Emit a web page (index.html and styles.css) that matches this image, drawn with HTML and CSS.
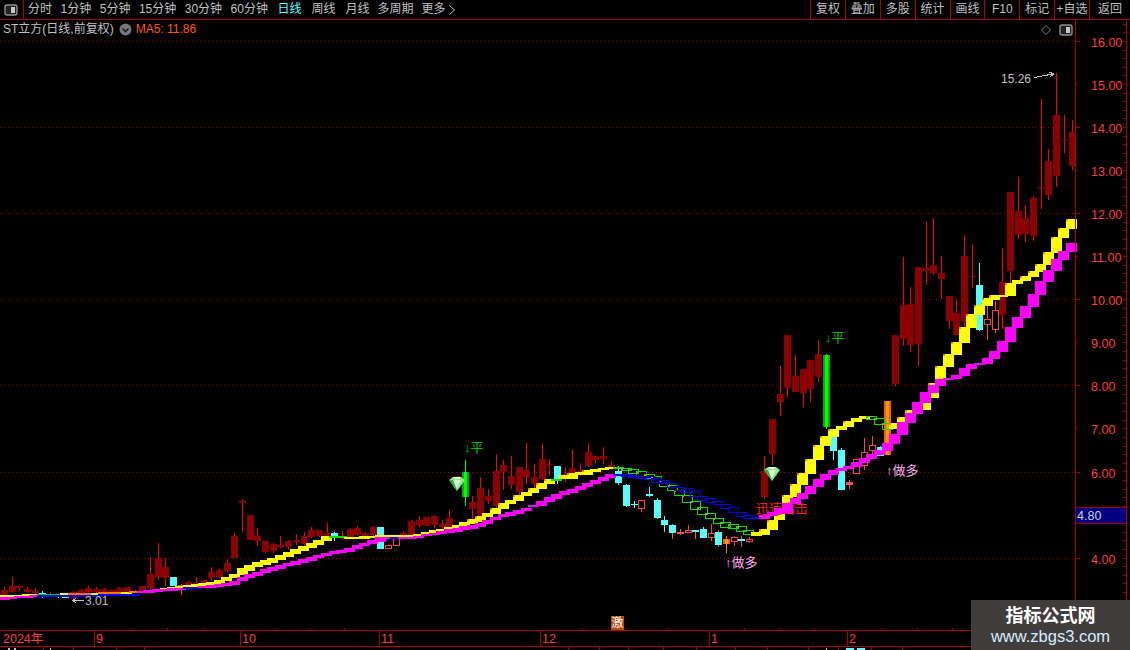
FILE: index.html
```html
<!DOCTYPE html>
<html lang="zh">
<head>
<meta charset="utf-8">
<title>ST立方</title>
<link rel="stylesheet" href="styles.css">
</head>
<body>
<div class="app">
  <header class="toolbar">
    <div class="panel-toggle">
      <svg class="panel-icon" width="14" height="12" viewBox="0 0 14 12"><rect x="1" y="1" width="12" height="10" rx="2" class="pi-frame"/><rect x="7" y="3" width="4" height="6" class="pi-bar"/></svg>
    </div>
    <nav class="tabs tabs-period">
      <span>分时</span><span>1分钟</span><span>5分钟</span><span>15分钟</span><span>30分钟</span><span>60分钟</span>
    </nav>
    <nav class="tabs tabs-day">
      <span class="active">日线</span><span>周线</span><span>月线</span>
    </nav>
    <nav class="tabs tabs-more">
      <span>多周期</span>
      <span class="more">更多<svg width="8" height="12" viewBox="0 0 8 12"><path d="M1.5 1.5 6.5 6 1.5 10.5" class="chev"/></svg></span>
    </nav>
    <div class="tools">
      <span>复权</span><span>叠加</span><span>多股</span><span>统计</span><span>画线</span><span>F10</span><span>标记</span><span>+自选</span><span class="back">返回</span>
    </div>
  </header>
  <main class="stage">
    <div id="chart" class="chart"></div>
    <div class="legend">
      <span class="legend-name">ST立方(日线,前复权)</span>
      <svg width="13" height="13" viewBox="0 0 13 13" class="legend-drop"><circle cx="6.5" cy="6.5" r="6" class="drop-bg"/><path d="M3.5 5.5 6.5 8.5 9.5 5.5" class="drop-chev"/></svg>
      <span class="legend-ma">MA5: 11.86</span>
    </div>
    <div class="corner-tools">
      <svg width="10" height="10" viewBox="0 0 10 10"><path d="M5 .5 9.5 5 5 9.5 .5 5Z" class="diamond"/></svg>
      <svg width="14" height="12" viewBox="0 0 14 12"><rect x="1" y="1" width="12" height="10" rx="2" class="pi-frame"/><rect x="7" y="3" width="4" height="6" class="pi-bar"/></svg>
    </div>
    <aside class="watermark">
      <div class="wm-title">指标公式网</div>
      <div class="wm-url">www.zbgs3.com</div>
    </aside>
  </main>
</div>
<script src="chart.js"></script>
</body>
</html>
```
FILE: styles.css
```css
* { box-sizing: border-box; }
html, body { margin: 0; padding: 0; background: #000; }
body { font-family: "Liberation Sans", "Noto Sans CJK SC", sans-serif; font-size: 12px; color: #c0c0c0; }
.app { width: 1130px; height: 650px; display: flex; flex-direction: column; overflow: hidden; background: #000; }

.toolbar { flex: 0 0 20px; display: flex; align-items: stretch; border-bottom: 1px solid #a80000; line-height: 19px; white-space: nowrap; }
.panel-toggle { width: 24px; border-right: 1px solid #a80000; display: flex; align-items: center; padding-left: 4px; }
.panel-icon { display: block; }
.pi-frame { fill: #222; stroke: #909090; stroke-width: 1.4; }
.pi-bar { fill: #c8c8c8; }
.tabs { display: flex; }
.tabs-period { gap: 8.5px; margin-left: 4px; }
.tabs-day { gap: 10px; margin-left: 9.5px; }
.tabs-more { gap: 8px; margin-left: 8px; }
.active { color: #55ffff; }
.more { display: flex; align-items: center; gap: 2px; }
.chev { fill: none; stroke: #c0c0c0; stroke-width: 1; }
.tools { margin-left: auto; display: flex; }
.tools span { width: 34.875px; border-left: 1px solid #a80000; text-align: center; }
.tools .back { width: 41px; }

.stage { flex: 1; position: relative; }
.chart { width: 1130px; height: 630px; }
.chart svg { display: block; }

.legend { position: absolute; left: 3px; top: 0; height: 18px; display: flex; align-items: center; line-height: 18px; white-space: nowrap; }
.legend-drop { margin-left: 5px; }
.drop-bg { fill: #777; }
.drop-chev { fill: none; stroke: #111; stroke-width: 1.3; }
.legend-ma { margin-left: 4px; color: #ff5a00; }

.corner-tools { position: absolute; right: 57px; top: 4px; display: flex; align-items: center; gap: 8px; }
.corner-tools svg { display: block; }
.diamond { fill: none; stroke: #808080; stroke-width: 1; }

.watermark { position: absolute; left: 971px; top: 580px; width: 159px; height: 50px; background: #413d3c; text-align: center; }
.wm-title { font-size: 18px; font-weight: 700; line-height: 22px; margin-top: 5px; color: #fff; }
.wm-url { font-size: 16.5px; line-height: 18px; color: #d8ecff; }

/* chart drawing */
.grid { stroke: #a80000; stroke-dasharray: 1 3; stroke-width: 1; }
.rule { stroke: #a80000; stroke-width: 1; }
.price { fill: #ff3c3c; font-size: 12.5px; }
.date { fill: #ff3c3c; font-size: 12.5px; }
.note { font-size: 13px; }
.note-gray { fill: #c0c0c0; font-size: 12px; }
.note-green { fill: #00c000; }
.note-pink { fill: #ffa8f0; }
.note-red { fill: #ff2020; }
.arrow { stroke: #c0c0c0; stroke-width: 1; fill: none; }
.box-price { fill: #000080; stroke: #a80000; }
.box-text { fill: #d0d0d0; font-size: 12.5px; }
.badge-text { fill: #fff; font-size: 12px; }
.gem-a { fill: #8fe88f; }
.gem-b { fill: #d8ffd8; }
.gem-c { fill: #30b030; }
text { font-family: "Liberation Sans", "Noto Sans CJK SC", sans-serif; }
```
FILE: chart.js
```js
// Candle data in screen pixels: [type, bodyTop, bodyBottom, wickTop, wickBottom]
// d dark up, c cyan down, h hollow, p pink small, g green signal, o orange signal, w white
var CANDLES = [
['d',590,596,587,597],['d',586,592,577,592],['d',586,588,586,591],['d',589,592,587,593],['d',591,593,588,595],
['c',593,594,591,598],['d',594,596,592,597],['w',596,597,596,598],['c',596,598,595,598],['d',592,598,591,599],
['d',590,593,589,594],['d',588,592,586,593],['d',589,592,587,593],['d',589,592,588,593],['d',590,592,590,592],
['d',588,592,587,593],['d',587,592,587,592],['d',591,592,590,593],['d',586,591,586,591],['d',574,588,558,590],
['d',558,577,543,580],['d',567,578,558,586],['c',577,586,577,586],['h',585,588,584,595],['d',582,587,581,590],
['d',583,584,577,584],['d',580,583,580,583],['d',572,578,567,581],['d',570,577,569,578],['d',563,571,559,572],
['d',536,558,533,558],['d',501,503,499,532],['d',515,540,515,540],['d',536,541,528,546],['d',541,552,541,553],
['d',544,551,543,553],['d',545,547,536,548],['d',541,547,540,550],['d',540,542,534,545],['d',536,544,532,546],
['d',530,537,527,538],['d',530,536,530,537],['d',533,536,523,537],['c',533,537,532,541],['d',537,539,531,540],
['d',529,537,528,538],['d',528,535,526,536],['d',533,537,532,538],['d',527,535,526,536],['c',527,549,527,549],
['h',545,549,545,549],['h',537,546,537,546],['d',533,536,531,537],['d',521,535,520,535],['d',520,525,516,527],
['d',517,526,517,526],['d',516,525,515,528],['d',524,527,520,530],['d',518,527,510,528],['d',476,477,476,477],
['g',472,497,460,506],['d',502,509,496,520],['d',488,517,477,520],['d',496,501,489,504],['d',471,506,454,508],
['d',465,472,460,490],['d',476,485,456,489],['d',467,492,467,495],['d',470,477,443,484],['d',477,484,464,491],
['d',459,479,444,480],['d',464,465,459,475],['c',466,479,466,484],['d',474,478,467,482],['d',468,475,450,477],
['d',471,474,463,476],['d',452,466,443,467],['d',456,460,456,463],['d',456,459,447,464],['d',465,468,461,470],
['c',471,483,466,485],['c',485,506,484,507],['c',504,505,501,508],['h',500,509,500,512],['c',494,496,487,497],
['c',500,518,498,519],['c',520,525,516,532],['cp',525,533,524,539],['p',532,534,529,535],['h',530,533,525,533],
['cp',530,532,530,539],['c',529,538,527,538],['h',533,538,524,541],['cp',532,545,530,547],['o',539,544,536,553],
['h',537,542,536,546],['cp',539,541,536,547],['h',539,542,537,543],null,['d',471,497,456,499],
['d',419,454,419,465],['d',394,402,366,416],['d',335,388,335,397],['d',376,392,355,392],['d',369,393,369,407],
['d',360,389,360,402],['d',354,377,340,382],['g',355,427,354,429],['c',437,451,437,460],['c',450,490,448,490],
['p',482,485,480,489],['h',459,474,459,474],['h',452,466,438,470],['h',445,451,436,455],['c',447,456,446,456],
['o',401,455,401,455],['d',335,384,335,386],['d',305,339,257,346],['d',304,345,287,352],['d',267,344,267,366],
['d',268,271,222,285],['d',265,273,218,275],['d',273,279,256,299],['d',296,321,296,329],['d',313,335,300,335],
['d',256,322,235,327],['d',276,277,244,288],['c',285,330,263,331],['h',319,325,306,340],['h',310,330,301,333],
['d',282,315,248,329],['d',192,271,192,284],['d',211,235,177,239],['d',218,234,205,242],['d',198,236,196,241],
['d',187,188,99,209],['d',161,195,149,200],['d',115,176,73,187],['d',140,141,115,153],['d',132,166,120,170]
];

// Band keyframes [k, top, bottom]; steps between keyframes are interpolated.
var YELLOW = [[0,595,597],[4,594,596],[10,593,595],[19,591,593],[21,588,591],[24,585,588],[26,583,586],[28,580,584],
[30,574,578],[31,568,575],[33,562,567],[35,558,563],[37,552,557],[39,546,551],[41,540,545],[42,536,541],[44,536,539],
[46,537,539],[49,535,538],[53,535,537],[55,532,534],[59,525,529],[60,522,526],[62,516,522],[63,513,517],[64,508,514],
[65,503,509],[66,500,504],[67,495,501],[68,492,496],[69,488,493],[70,483,489],[71,479,484],[72,479,481],[73,475,479],
[74,473,479],[75,472,475],[76,470,475],[77,469,472],[78,468,470],[79,467,469],[80,467,469],[81,468,470],[82,469,473],
[83,471,476],[84,474,478],[85,476,482],[86,480,486],[87,485,490],[88,490,495],[89,495,502],[90,501,509],[91,507,514],
[92,513,518],[93,518,523],[94,522,527],[95,524,528],[96,526,531],[97,530,534],[98,532,536],[99,529,535],[100,520,530],
[101,510,520],[102,495,510],[103,484,497],[104,473,485],[105,459,474],[106,445,460],[107,436,446],[108,429,437],
[109,426,430],[110,421,427],[111,418,422],[112,416,419],[113,416,419],[114,418,424],[115,423,429],[116,423,429],
[117,417,422],[118,410,416],[119,405,412],[120,400,410],[121,383,398],[122,366,379],[123,354,367],[124,342,355],
[125,327,343],[126,314,328],[127,305,315],[128,298,306],[129,295,300],[130,295,297],[131,283,296],[132,280,284],
[133,276,281],[134,271,277],[135,264,272],[136,252,265],[137,237,253],[138,228,238],[139,219,229]];

var MAGENTA = [[0,597,600],[2,596,598],[4,595,597],[7,595,596],[17,594,595],[18,591,593],[20,589,592],[24,587,589],
[26,586,588],[28,584,587],[30,581,585],[31,577,581],[32,574,578],[33,572,576],[34,569,573],[35,567,571],[37,563,566],
[39,559,563],[41,555,558],[43,551,554],[45,548,552],[46,545,549],[47,543,546],[48,540,544],[49,537,542],[50,537,539],
[51,537,539],[53,537,539],[56,533,535],[58,529,533],[60,526,530],[62,523,527],[64,517,520],[65,514,517],[67,510,514],
[69,505,507],[70,501,506],[71,497,502],[73,491,495],[75,486,490],[76,483,487],[77,480,484],[78,477,481],[79,474,478],
[80,474,475],[81,474,476],[82,475,477],[84,476,479],[85,478,482],[86,480,483],[87,483,487],[88,487,490],[89,488,492],
[90,491,496],[91,496,500],[92,498,502],[93,501,504],[94,504,508],[95,507,512],[96,512,516],[97,515,518],[98,517,519],
[99,515,519],[100,512,516],[101,508,514],[102,503,513],[103,498,504],[104,493,499],[105,486,494],[106,479,487],
[107,474,480],[108,470,475],[109,468,471],[110,466,469],[111,462,467],[112,458,463],[113,454,459],[114,450,455],
[115,443,451],[116,434,444],[117,422,435],[118,413,423],[119,402,414],[120,392,403],[121,385,393],[122,379,386],
[123,378,380],[124,375,379],[125,368,376],[126,364,369],[127,363,365],[128,358,364],[129,351,359],[130,341,352],
[131,327,342],[132,317,328],[133,306,318],[134,294,307],[135,281,295],[136,270,282],[137,259,271],[138,251,260],[139,243,252]];

var PRICE_TOP = 41, PX_PER_UNIT = 43.05;
var RED = '#ff0000', PINK = '#ff5050', HOLLOW = '#ff4040', CYAN = '#55ffff', DARK = '#8b0000';

function slotX(k) { return 4 + 7.68 * k; }
function priceY(p) { return Math.round(PRICE_TOP + (16 - p) * PX_PER_UNIT); }

function expand(frames) {
  var out = [];
  for (var i = 0; i < frames.length - 1; i++) {
    var a = frames[i], b = frames[i + 1];
    for (var k = a[0]; k < b[0]; k++) {
      var t = (k - a[0]) / (b[0] - a[0]);
      out[k] = [Math.round(a[1] + (b[1] - a[1]) * t), Math.round(a[2] + (b[2] - a[2]) * t)];
    }
  }
  var last = frames[frames.length - 1];
  out[last[0]] = [last[1], last[2]];
  return out;
}

var parts = [];
function rect(x, y, w, h, fill) {
  parts.push('<rect x="' + x + '" y="' + y + '" width="' + w + '" height="' + Math.max(h, 1) + '" fill="' + fill + '"/>');
}
function frame(x, y, w, h, stroke, fill) {
  parts.push('<rect x="' + (x + 0.5) + '" y="' + (y + 0.5) + '" width="' + (w - 1) + '" height="' + Math.max(h - 1, 1) + '" fill="' + (fill || 'none') + '" stroke="' + stroke + '"/>');
}
function line(x1, y1, x2, y2, cls) {
  parts.push('<line x1="' + x1 + '" y1="' + y1 + '" x2="' + x2 + '" y2="' + y2 + '" class="' + cls + '"/>');
}
function text(x, y, cls, s) {
  parts.push('<text x="' + x + '" y="' + y + '" class="' + cls + '">' + s + '</text>');
}

function drawGrid() {
  for (var p = 16; p >= 4; p -= 2) {
    line(0, priceY(p) + 0.5, 1075, priceY(p) + 0.5, 'grid');
  }
}

function drawCandles() {
  CANDLES.forEach(function (c, k) {
    if (!c) return;
    var x = slotX(k), cx = Math.round(x), left = cx - 3;
    var type = c[0], top = c[1], bot = c[2], wt = c[3], wb = c[4];
    var wick = { d: RED, c: CYAN, cp: PINK, h: HOLLOW, p: PINK, g: '#00ff00', o: '#ff8000', w: '#ffffff' }[type];
    rect(cx, wt, 1, wb - wt, wick);
    if (type === 'd') rect(left, top, 7, bot - top, DARK);
    else if (type === 'c' || type === 'cp') rect(left, top, 7, bot - top, CYAN);
    else if (type === 'w') rect(left, top, 7, bot - top, '#ffffff');
    else if (type === 'p') rect(left, top, 7, bot - top, PINK);
    else if (type === 'h') frame(left, top, 7, bot - top, HOLLOW, '#000');
    else if (type === 'g') { rect(left, top, 7, bot - top, '#00b000'); rect(left + 2, top, 3, bot - top, '#00ff00'); }
    else if (type === 'o') { rect(left, top, 7, bot - top, '#ff5a00'); rect(left + 2, top, 3, bot - top, '#ff9a00'); }
  });
}

function drawUpper() {
  var bands = expand(YELLOW);
  bands.forEach(function (b, k) {
    var x = Math.round(slotX(k) - 5.5), h = b[1] - b[0];
    var down = (k >= 81 && k <= 97) || (k >= 113 && k <= 115);
    if (down) {
      frame(x, b[0], 11, h + 1, '#00e000');
      rect(x, b[0] + 1, 2, 1, '#ff8000');
    } else if (k >= 5 && k <= 18 && k % 4 !== 0) {
      rect(x, b[0], 11, h, k < 8 ? '#00d000' : '#ff7000');
    } else if (k === 43 || k === 44 || k === 72 || k === 80) {
      rect(x, b[0], 11, 2, '#00e000');
    } else {
      rect(x, b[0], 11, h, '#ffff00');
      if (h >= 5 && k > 55) rect(x, b[0], 2, 2, '#ff8000');
    }
  });
}

function drawLower() {
  var bands = expand(MAGENTA);
  bands.forEach(function (b, k) {
    var x = Math.round(slotX(k) - 5.5), h = b[1] - b[0];
    if (k >= 80 && k <= 97) frame(x, b[0], 11, h + 1, '#0000e0');
    else if ((k >= 5 && k <= 17) || (k >= 24 && k <= 25) || k === 51 || k === 98) rect(x, b[0], 11, Math.max(h, 2), '#0000ff');
    else rect(x, b[0], 11, h, '#ff00ff');
  });
}

function drawAxis() {
  line(1075.5, 20, 1075.5, 630, 'rule');
  line(1126.5, 20, 1126.5, 630, 'rule');
  for (var p = 16; p >= 4; p--) {
    var y = priceY(p) + 0.5;
    line(1075, y, p % 2 ? 1078 : 1080, y, 'rule');
    if (p !== 5) text(1091, y + 5, 'price', p.toFixed(2));
  }
  for (var m = 16.4; m > 2.4; m -= 0.2) {
    var my = Math.round(PRICE_TOP + (16 - m) * PX_PER_UNIT) + 0.5;
    line(1123, my, 1126, my, 'rule');
  }
  parts.push('<rect x="1075.5" y="507.5" width="51" height="16" class="box-price"/>');
  text(1077, 520, 'box-text', '4.80');
}

function drawDates() {
  line(0, 630.5, 1130, 630.5, 'rule');
  line(0, 646.5, 1130, 646.5, 'rule');
  [94, 240, 379, 540, 709, 847].forEach(function (x) { line(x + 0.5, 630, x + 0.5, 646, 'rule'); });
  [131, 167, 204, 275, 310, 344, 582, 625, 667, 744, 779, 814, 882, 917, 952].forEach(function (x) {
    line(x + 0.5, 628, x + 0.5, 630, 'rule');
  });
  [43, 73, 116, 144, 568, 599, 628, 663, 696, 735, 767, 808, 838, 871, 902].forEach(function (x) {
    line(x + 0.5, 647, x + 0.5, 650, 'rule');
  });
  rect(8, 648, 2, 2, '#c0c0c0'); rect(14, 648, 2, 2, '#c0c0c0'); rect(50, 648, 1, 2, '#c0c0c0');
  rect(826, 648, 1, 2, '#c0c0c0'); rect(846, 648, 8, 2, CYAN); rect(857, 648, 8, 2, CYAN);
  text(3, 643, 'date', '2024年');
  text(96, 643, 'date', '9');
  text(242, 643, 'date', '10');
  text(381, 643, 'date', '11');
  text(542, 643, 'date', '12');
  text(711, 643, 'date', '1');
  text(849, 643, 'date', '2');
}

function gem(cx, cy) {
  parts.push('<g transform="translate(' + cx + ' ' + cy + ')" shape-rendering="auto">' +
    '<polygon points="-8,-4 -4,-7 4,-7 8,-4 0,7" class="gem-a"/>' +
    '<polygon points="-4,-4 4,-4 0,4" class="gem-b"/>' +
    '<polygon points="-8,-4 -4,-4 0,7" class="gem-c"/>' +
    '<polygon points="-4,-7 4,-7 2,-5 -2,-5" class="gem-b"/></g>');
}

function drawNotes() {
  gem(457, 484); gem(772, 474);
  text(85, 605, 'note-gray', '3.01');
  parts.push('<path d="M84 600.5H73M76 598 73 600.5 76 603" class="arrow"/>');
  text(1001, 83, 'note-gray', '15.26');
  parts.push('<path d="M1034 77.5 1053 74M1049 72 1054 74 1050 77" class="arrow"/>');
  text(464, 452, 'note note-green', '↓平');
  text(825, 342, 'note note-green', '↓平');
  text(725, 567, 'note note-pink', '↑做多');
  text(886, 475, 'note note-pink', '↑做多');
  rect(611, 616, 13, 14, '#b84a0c');
  text(611.5, 627, 'badge-text', '激');
}

function build() {
  drawGrid();
  drawCandles();
  drawUpper();
  text(756, 513, 'note note-red', '迅速出击');
  drawLower();
  drawAxis();
  drawDates();
  drawNotes();
  document.getElementById('chart').innerHTML =
    '<svg xmlns="http://www.w3.org/2000/svg" width="1130" height="630" viewBox="0 20 1130 630" shape-rendering="crispEdges">' +
    parts.join('') + '</svg>';
}
build();
```
